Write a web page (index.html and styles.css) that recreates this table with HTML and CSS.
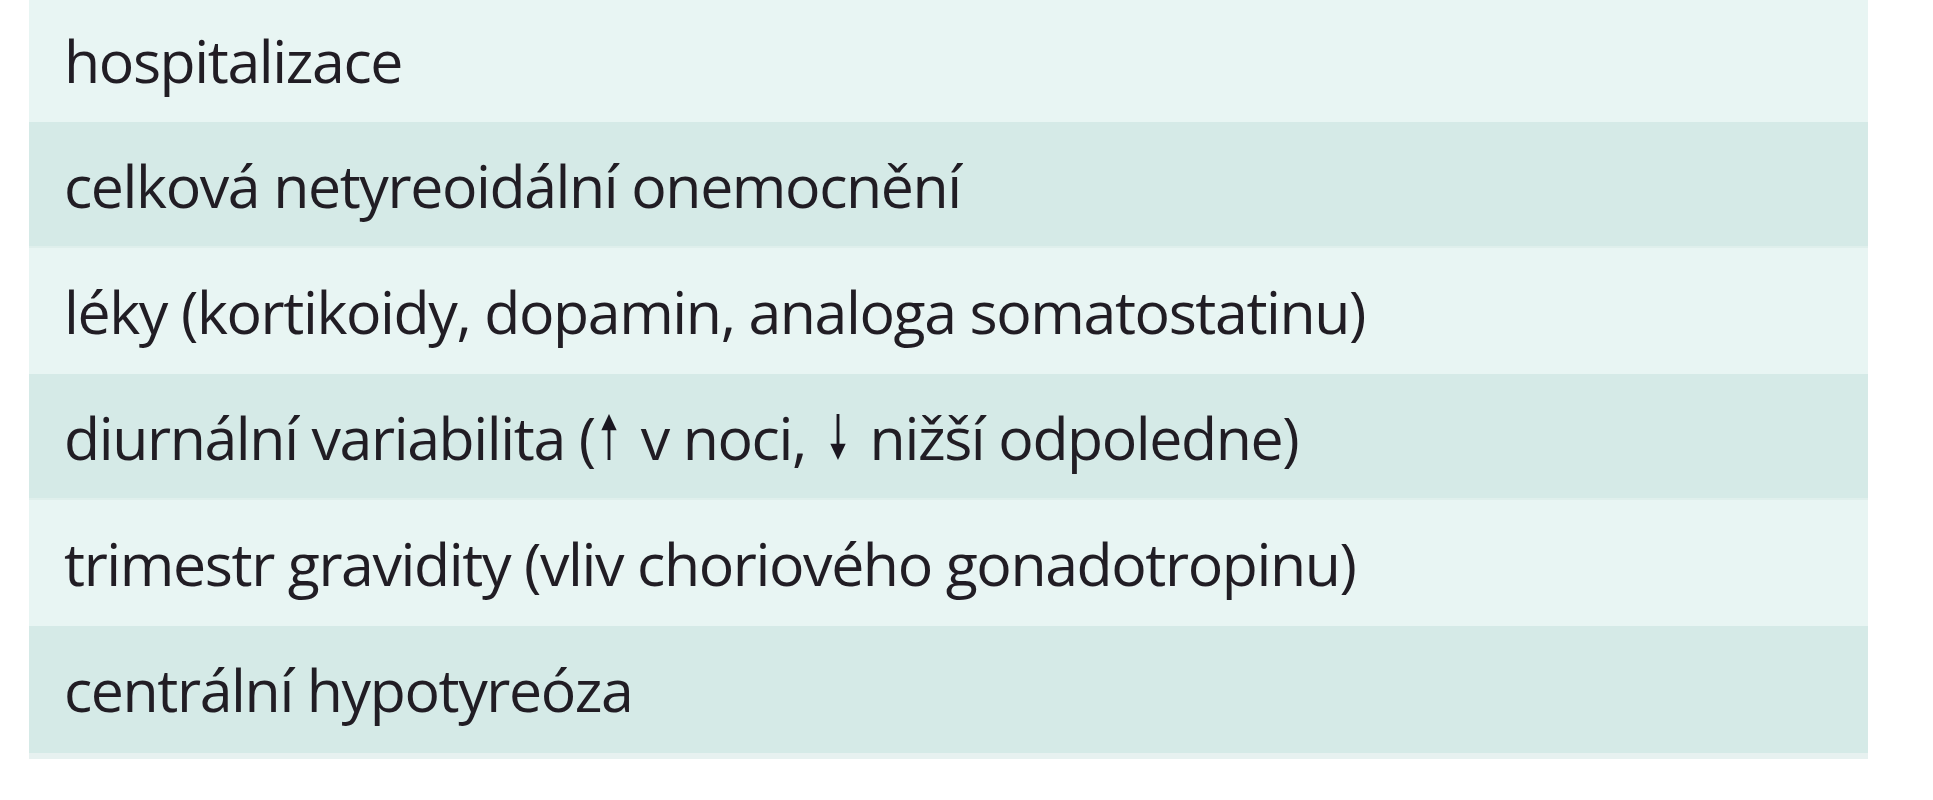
FILE: index.html
```html
<!DOCTYPE html>
<html lang="cs">
<head>
<meta charset="utf-8">
<title>TSH</title>
<link rel="stylesheet" href="styles.css">
</head>
<body>
<div class="table">
  <div class="row light first">hospitalizace</div>
  <div class="row dark">celková netyreoidální onemocnění</div>
  <div class="row light">léky (kortikoidy, dopamin, analoga somatostatinu)</div>
  <div class="row dark">diurnální variabilita (<svg class="arrow up" viewBox="0 0 20 48" role="img" aria-label="↑"><polygon points="10,0 2,17 18,17"/><rect x="8.5" y="12" width="3" height="36"/></svg> v noci, <svg class="arrow down" viewBox="0 0 20 48" role="img" aria-label="↓"><rect x="8.5" y="0" width="3" height="36"/><polygon points="2,31 18,31 10,48"/></svg> nižší odpoledne)</div>
  <div class="row light">trimestr gravidity (vliv choriového gonadotropinu)</div>
  <div class="row dark last">centrální hypotyreóza</div>
</div>
</body>
</html>
```
FILE: styles.css
```css
html, body {
  margin: 0;
  padding: 0;
  background: #ffffff;
}
.table {
  margin-left: 29px;
  width: 1839px;
  display: flex;
  flex-direction: column;
  font-family: "Open Sans", "Lato", sans-serif;
  font-size: 59px;
  letter-spacing: -1.4px;
  color: #211d24;
}
.row {
  height: 126px;
  line-height: 126px;
  padding-left: 35px;
  white-space: nowrap;
  box-sizing: border-box;
}
.row.first {
  height: 122px;
  line-height: 120px;
}
.light {
  background: #e8f5f3;
}
.dark {
  background: #d5eae7;
  border-bottom: 2px solid #dfefec;
}
.row.last {
  border-bottom: 6px solid #e7f1f0;
  height: 133px;
}
.arrow {
  width: 20px;
  height: 46px;
  margin-right: 8px;
  vertical-align: baseline;
  fill: #1a1620;
}
.arrow.up {
  margin-left: 4px;
}
.arrow.down {
  margin-left: 8px;
}
```
